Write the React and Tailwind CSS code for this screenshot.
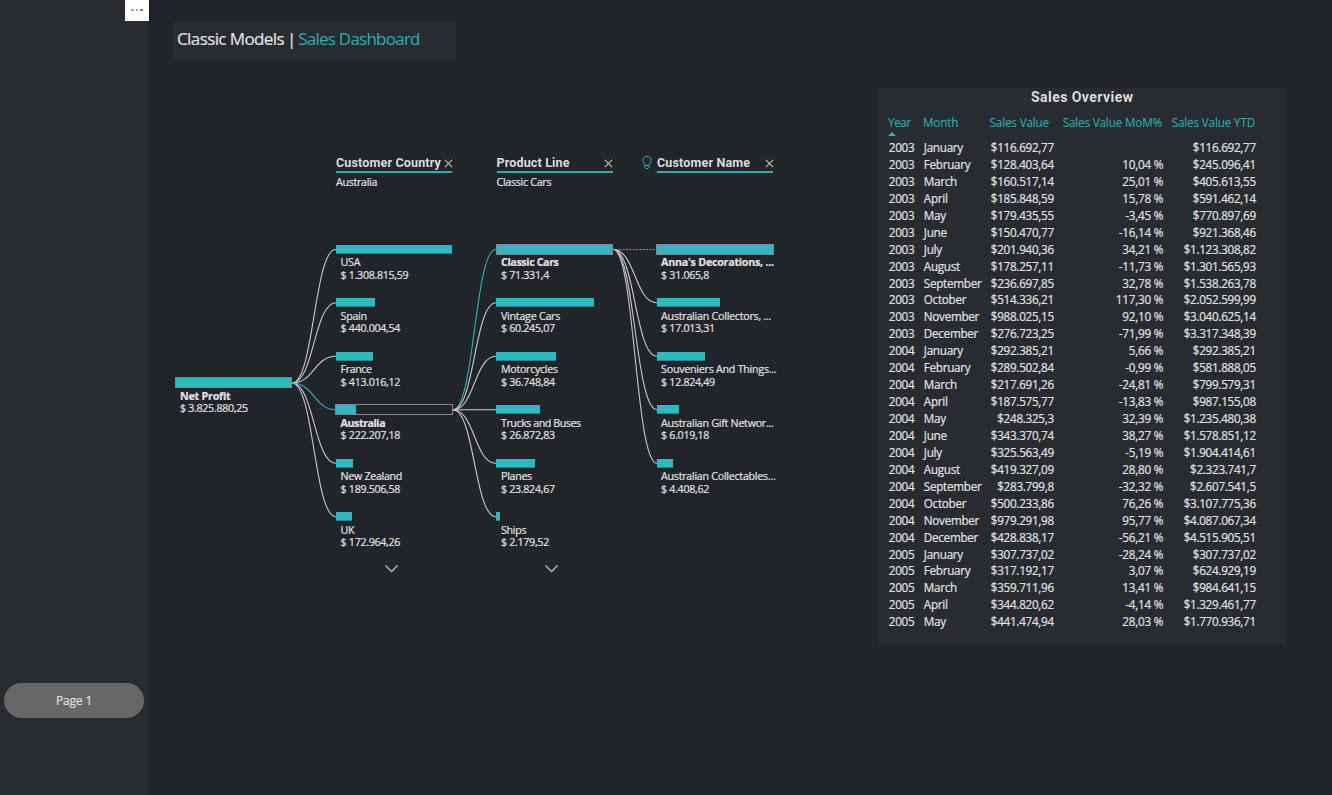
import React from "react";

const rows = `2003|January|$116.692,77||$116.692,77
2003|February|$128.403,64|10,04 %|$245.096,41
2003|March|$160.517,14|25,01 %|$405.613,55
2003|April|$185.848,59|15,78 %|$591.462,14
2003|May|$179.435,55|-3,45 %|$770.897,69
2003|June|$150.470,77|-16,14 %|$921.368,46
2003|July|$201.940,36|34,21 %|$1.123.308,82
2003|August|$178.257,11|-11,73 %|$1.301.565,93
2003|September|$236.697,85|32,78 %|$1.538.263,78
2003|October|$514.336,21|117,30 %|$2.052.599,99
2003|November|$988.025,15|92,10 %|$3.040.625,14
2003|December|$276.723,25|-71,99 %|$3.317.348,39
2004|January|$292.385,21|5,66 %|$292.385,21
2004|February|$289.502,84|-0,99 %|$581.888,05
2004|March|$217.691,26|-24,81 %|$799.579,31
2004|April|$187.575,77|-13,83 %|$987.155,08
2004|May|$248.325,3|32,39 %|$1.235.480,38
2004|June|$343.370,74|38,27 %|$1.578.851,12
2004|July|$325.563,49|-5,19 %|$1.904.414,61
2004|August|$419.327,09|28,80 %|$2.323.741,7
2004|September|$283.799,8|-32,32 %|$2.607.541,5
2004|October|$500.233,86|76,26 %|$3.107.775,36
2004|November|$979.291,98|95,77 %|$4.087.067,34
2004|December|$428.838,17|-56,21 %|$4.515.905,51
2005|January|$307.737,02|-28,24 %|$307.737,02
2005|February|$317.192,17|3,07 %|$624.929,19
2005|March|$359.711,96|13,41 %|$984.641,15
2005|April|$344.820,62|-4,14 %|$1.329.461,77
2005|May|$441.474,94|28,03 %|$1.770.936,71`
  .split("\n")
  .map((line) => line.split("|"));

// Node positions are relative to the tree canvas, whose origin is (160, 140).
const columns = [
  { x: 15, inset: true, items: [{ row: 2.5, name: "Net Profit", value: "$ 3.825.880,25", w: 117, on: true, track: "tracking-[-0.22px]" }] },
  {
    x: 176,
    items: [
      { row: 0, name: "USA", value: "$ 1.308.815,59", w: 116, track: "tracking-[-0.3px]" },
      { row: 1, name: "Spain", value: "$ 440.004,54", w: 39, track: "tracking-[-0.3px]" },
      { row: 2, name: "France", value: "$ 413.016,12", w: 37, track: "tracking-[-0.4px]" },
      { row: 3, name: "Australia", value: "$ 222.207,18", w: 20, on: true, track: "tracking-[-0.45px]" },
      { row: 4, name: "New Zealand", value: "$ 189.506,58", w: 17, track: "tracking-[-0.32px]" },
      { row: 5, name: "UK", value: "$ 172.964,26", w: 16, track: "tracking-[-0.3px]" },
    ],
  },
  {
    x: 336,
    inset: true,
    items: [
      { row: 0, name: "Classic Cars", value: "$ 71.331,4", w: 117, on: true, track: "tracking-[-0.38px]" },
      { row: 1, name: "Vintage Cars", value: "$ 60.245,07", w: 98, track: "tracking-[-0.25px]" },
      { row: 2, name: "Motorcycles", value: "$ 36.748,84", w: 60, track: "tracking-[-0.3px]" },
      { row: 3, name: "Trucks and Buses", value: "$ 26.872,83", w: 44, track: "tracking-[-0.45px]" },
      { row: 4, name: "Planes", value: "$ 23.824,67", w: 39, track: "tracking-[-0.3px]" },
      { row: 5, name: "Ships", value: "$ 2.179,52", w: 4, track: "tracking-[-0.3px]" },
    ],
  },
  {
    x: 496.5,
    items: [
      { row: 0, name: "Anna's Decorations, ...", value: "$ 31.065,8", w: 117, on: true, track: "tracking-[-0.24px]" },
      { row: 1, name: "Australian Collectors, ...", value: "$ 17.013,31", w: 63.5, track: "tracking-[-0.25px]" },
      { row: 2, name: "Souveniers And Things...", value: "$ 12.824,49", w: 48, track: "tracking-[-0.25px]" },
      { row: 3, name: "Australian Gift Networ...", value: "$ 6.019,18", w: 22.5, track: "tracking-[-0.27px]" },
      { row: 4, name: "Australian Collectables...", value: "$ 4.408,62", w: 16.5, track: "tracking-[-0.27px]" },
    ],
  },
];

const cy = (row) => 109.3 + row * 53.5;

const curve = (x1, r1, x2, r2) => {
  const m = (x1 + x2) / 2;
  return `M${x1} ${cy(r1)} C${m} ${cy(r1)} ${m} ${cy(r2)} ${x2} ${cy(r2)}`;
};

const links = [
  ...[0, 1, 2, 4, 5].map((r) => ({ d: curve(132, 2.5, 176, r) })),
  { d: curve(132, 2.5, 176, 3), on: true },
  { d: curve(293, 3, 336, 0), on: true },
  ...[1, 2, 3, 4, 5].map((r) => ({ d: curve(293, 3, 336, r) })),
  ...[1, 2, 3, 4].map((r) => ({ d: curve(453, 0, 497, r) })),
];

function Node({ x, node, inset }) {
  const top = Math.round(cy(node.row) - 4.6);
  const low = node.row % 2 !== 0;
  const bar = inset ? "w-[117px] outline-offset-[-1px]" : "w-[116px]";
  const pad = inset ? "pl-[5px]" : "pl-[4.6px]";
  return (
    <div className="absolute w-[124px] whitespace-nowrap" style={{ left: x, top }}>
      {node.on ? (
        <div className={`relative outline outline-1 outline-[#858688] ${inset ? "-mt-px h-[11px]" : "h-[9px]"} ${bar}`}>
          <div className={inset ? "h-full border border-[#858688] bg-[#2cb9c2]" : "h-full bg-[#2cb9c2]"} style={{ width: Math.min(node.w, inset ? 117 : 116) }} />
        </div>
      ) : (
        <div className={`h-[9px] ${bar}`}>
          <div className="h-full border-b border-[#25878e] bg-[#2cb9c2]" style={{ width: node.w }} />
        </div>
      )}
      <div
        className={`h-[15px] text-[10.7px] leading-[13px] ${pad} ${low ? "pt-[3px]" : "pt-[2px]"} ${node.on && inset ? "-mt-px" : ""} ${node.track} ${node.on ? "font-bold" : "font-medium"}`}
      >
        {node.name}
      </div>
      <div className={`text-[10.7px] font-medium leading-[12.4px] tracking-[-0.32px] ${pad}`}>{node.value}</div>
    </div>
  );
}

function Level({ title, sub, bulb }) {
  return (
    <div className="relative w-[116px]">
      {bulb && (
        <svg className="absolute -left-[15.5px] top-[1px]" width="10" height="14" viewBox="0 0 10 14" fill="none" stroke="#2bb5bd" strokeWidth="1">
          <path d="M3 9.5C3 7.5 .9 6.7 .9 4.6a4.1 4.1 0 0 1 8.2 0C9.1 6.7 7 7.5 7 9.5zM3 9.5v2.1l1 1h2l1-1V9.5" />
        </svg>
      )}
      <div className="flex h-[18px] items-center justify-between border-b-2 border-[#2aafb6] pb-px">
        <span className="whitespace-nowrap font-['Roboto',sans-serif] text-[12.5px] font-bold leading-[15px] tracking-[0.16px] text-[#dddcdb] [-webkit-text-stroke:0px]">{title}</span>
        <svg className="-mr-[0.5px] mt-[2px] shrink-0" width="9" height="9" viewBox="0 0 10 10" stroke="#c6c4c3" strokeWidth="1.2">
          <path d="M1 1l8 8M9 1l-8 8" />
        </svg>
      </div>
      <div className="pt-[2px] text-[10.7px] font-medium leading-[14px] tracking-[-0.3px]">{sub}</div>
    </div>
  );
}

function Tree() {
  return (
    <section className="relative mt-[79px] h-[450px] w-[640px]">
      <div className="flex gap-[44.5px] pl-[176px] pt-[15px]">
        <Level title="Customer Country" sub="Australia" />
        <Level title="Product Line" sub="Classic Cars" />
        <Level title="Customer Name" sub="" bulb />
      </div>
      <svg className="absolute left-0 top-0" width="640" height="450" fill="none" strokeWidth="1.1">
        {links.map((l, i) => (
          <path key={i} d={l.d} stroke={l.on ? "#2ab5bd" : "#cbcaca"} />
        ))}
        <path d="M453 109.500H497" stroke="#2ab5bd" strokeDasharray="2 1.3" />
        <path d="M225.500 425.500l6 6 6-6M385.500 425.500l6 6 6-6" stroke="#b5b3b2" strokeWidth="1.5" />
      </svg>
      {columns.map((c) => c.items.map((n) => <Node key={n.name} x={c.x} node={n} inset={c.inset} />))}
    </section>
  );
}

const grid = "grid grid-cols-[35px_59px_71px_109.500px_92.500px]";

function Overview() {
  return (
    <section className="mt-[88px] h-[555px] w-[408.500px] bg-[#282b2f]">
      <h2 className="h-[26px] text-center font-['Roboto',sans-serif] text-[14px] font-bold leading-[18px] tracking-[0.45px] text-[#dddcdb] [-webkit-text-stroke:0px]">Sales Overview</h2>
      <div className={`${grid} h-[25px] whitespace-nowrap pl-[10px] text-[11.7px] leading-[17px] tracking-[-0.16px] text-[#27b0b4] [-webkit-text-stroke:0.1px]`}>
        <div>
          <span className="tracking-[-0.4px]">Year</span>
          <svg className="mt-px block" width="8" height="4" viewBox="0 0 8 4" fill="#2bbac0">
            <path d="M0 4L4 0l4 4z" />
          </svg>
        </div>
        <div>Month</div>
        <div className="pr-[4px] text-right">Sales Value</div>
        <div className="-ml-px pr-[0.500px] text-right">Sales Value MoM%</div>
        <div className="text-right">Sales Value YTD</div>
      </div>
      {rows.map((r) => (
        <div key={r[0] + r[1]} className={`${grid} h-[16.940px] whitespace-nowrap pl-[10.800px] text-[11.700px] font-medium leading-[17.400px] tracking-[-0.3px]`}>
          <div>{r[0]}</div>
          <div className="tracking-[-0.28px]">{r[1]}</div>
          <div className="text-right">{r[2]}</div>
          <div className="text-right tracking-[-0.2px]">{r[3]}</div>
          <div className="text-right">{r[4]}</div>
        </div>
      ))}
    </section>
  );
}

export default function App() {
  return (
    <div className="flex h-[795px] w-[1332px] overflow-hidden bg-[#212429] font-['Open_Sans','Noto_Sans',sans-serif] text-[#e3e2e1] [-webkit-text-stroke:0.2px]">
      <aside className="flex w-[150px] flex-col border-r border-[#1c1f23] bg-[#282b2f]">
        <button className="flex h-[21px] w-[24px] items-center justify-center gap-[2px] self-end bg-white pb-px">
          <span className="size-[2.500px] rounded-[1px] bg-[#959595]" />
          <span className="size-[2.500px] rounded-[1px] bg-[#959595]" />
          <span className="size-[2.500px] rounded-[1px] bg-[#606060]" />
        </button>
        <button className="ml-[4px] mt-[662px] h-[35px] w-[140px] rounded-full bg-[#676767] text-[12px] tracking-[-0.15px]">Page 1</button>
      </aside>
      <main className="flex flex-1 items-start pl-[10px]">
        <div className="w-[718px]">
          <h1 className="ml-[13px] mt-[23px] h-[38px] w-[282.500px] whitespace-nowrap bg-[#282b2f] pl-[4px] text-[17px] leading-[32px] tracking-[-0.76px]">
            <span className="tracking-[-0.6px]">Classic Models</span>
            <span className="tracking-[-1.300px]"> | </span>
            <span className="text-[#2bafb5] [-webkit-text-stroke:0px]">Sales Dashboard</span>
          </h1>
          <Tree />
        </div>
        <Overview />
      </main>
    </div>
  );
}
